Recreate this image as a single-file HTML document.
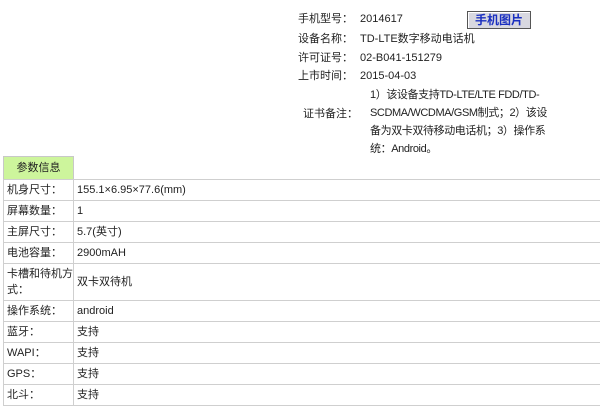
<!DOCTYPE html>
<html><head><meta charset="utf-8"><style>
body{margin:0;width:600px;height:410px;background:#fff;font-family:"Liberation Sans","Noto Sans CJK SC",sans-serif;font-size:11px;color:#222;position:relative;overflow:hidden}
.a{position:absolute;white-space:nowrap;line-height:14px}
.btn{position:absolute;left:467px;top:11px;width:62px;height:16px;background:#d8d8e0;border:1px solid #555;box-shadow:inset 1px 1px 0 #fff;color:#1a2fc0;font-weight:bold;font-size:12px;text-align:center;line-height:16px}
.hd{position:absolute;left:3px;top:156px;width:69px;height:22px;background:#cdf59c;border:1px solid #c8c8c8;text-align:center;line-height:22px;font-size:11px}
table{position:absolute;left:3px;top:179px;width:620px;border-collapse:collapse;table-layout:fixed}
td{border:1px solid #cfcfcf;padding:0 3px;font-size:11px;height:20px;line-height:14px;vertical-align:middle;white-space:nowrap}
</style></head><body>
<div class="a" style="left:298px;top:12px">手机型号：</div><div class="a" style="left:360px;top:12px">2014617</div>
<div class="btn">手机图片</div>
<div class="a" style="left:298px;top:32px">设备名称：</div><div class="a" style="left:360px;top:32px">TD-LTE数字移动电话机</div>
<div class="a" style="left:298px;top:51px">许可证号：</div><div class="a" style="left:360px;top:51px">02-B041-151279</div>
<div class="a" style="left:298px;top:69px">上市时间：</div><div class="a" style="left:360px;top:69px">2015-04-03</div>
<div class="a" style="left:303px;top:107px">证书备注：</div>
<div class="a" style="left:370px;top:86px;line-height:18px;letter-spacing:-0.4px">1）该设备支持TD-LTE/LTE FDD/TD-<br>SCDMA/WCDMA/GSM制式；2）该设<br>备为双卡双待移动电话机；3）操作系<br>统：Android。</div>
<div class="hd">参数信息</div>
<table>
<colgroup><col style="width:70px"><col></colgroup>
<tr><td>机身尺寸：</td><td>155.1×6.95×77.6(mm)</td></tr>
<tr><td>屏幕数量：</td><td>1</td></tr>
<tr><td>主屏尺寸：</td><td>5.7(英寸)</td></tr>
<tr><td>电池容量：</td><td>2900mAH</td></tr>
<tr><td style="height:36px;line-height:16px">卡槽和待机方<br>式：</td><td>双卡双待机</td></tr>
<tr><td>操作系统：</td><td>android</td></tr>
<tr><td>蓝牙：</td><td>支持</td></tr>
<tr><td>WAPI：</td><td>支持</td></tr>
<tr><td>GPS：</td><td>支持</td></tr>
<tr><td>北斗：</td><td>支持</td></tr>
</table>
</body></html>
